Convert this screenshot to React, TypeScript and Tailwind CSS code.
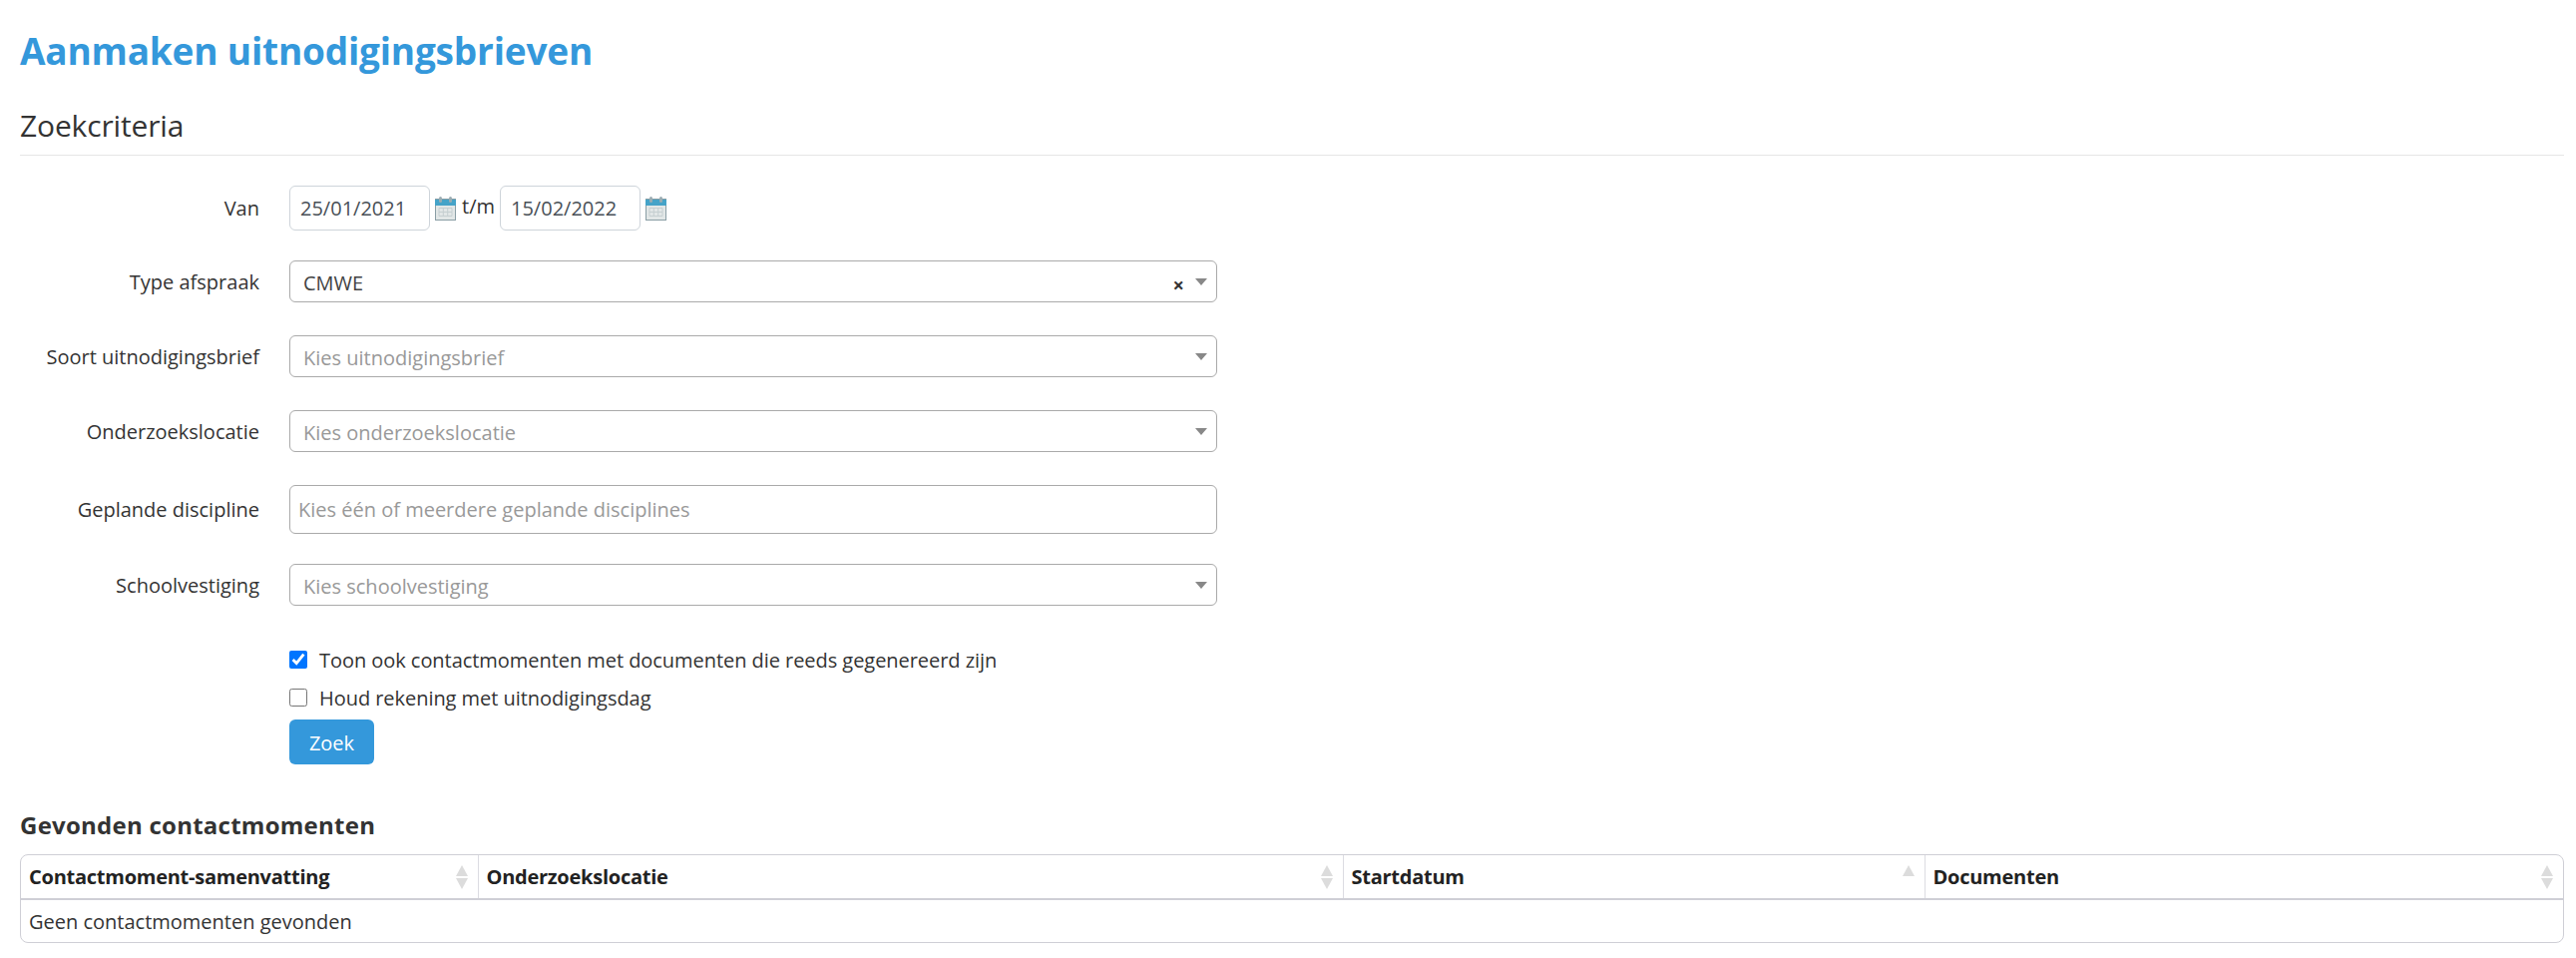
const font = { fontFamily: '"Open Sans", sans-serif' };

function Calendar() {
  return (
    <svg width="21" height="24" viewBox="0 0 21 24" className="shrink-0" aria-hidden="true">
      <rect x="0" y="2" width="21" height="22" fill="#8a9ea5" />
      <rect x="1" y="9" width="19" height="14" fill="#e2e7e7" />
      <rect x="0" y="3" width="21" height="6" fill="#45a3c8" />
      <rect x="4" y="0" width="3" height="6" rx="1.5" fill="#9aacb2" />
      <rect x="14" y="0" width="3" height="6" rx="1.5" fill="#9aacb2" />
      <path d="M4 11.5h13v8H4zM4 15.5h13M8.3 11.5v8M12.7 11.5v8" stroke="#c6cfd1" strokeWidth="1" fill="none" />
    </svg>
  );
}

function Arrow() {
  return (
    <svg width="12" height="7" viewBox="0 0 12 7" aria-hidden="true">
      <path d="M0 0h12L6 7z" fill="#888888" />
    </svg>
  );
}

function SortIcon({ upOnly }: { upOnly?: boolean }) {
  return (
    <svg width="14" height="24" viewBox="0 0 14 24" className="absolute right-[9px] top-[10px]" aria-hidden="true">
      <path d="M7 0l6 11H1z" fill="#dcdcdc" />
      {!upOnly && <path d="M7 24l6-11H1z" fill="#dcdcdc" />}
    </svg>
  );
}

function Row({ label, className, children }: { label: string; className: string; children: React.ReactNode }) {
  return (
    <div className={`flex items-center ${className}`}>
      <label className="w-[240px] pt-[1px] text-right text-[20px] text-[#333]">{label}</label>
      <div className="ml-[30px] flex items-center">{children}</div>
    </div>
  );
}

function Select({ value, placeholder }: { value?: string; placeholder?: string }) {
  return (
    <div className="relative flex h-[42px] w-[930px] items-center rounded-[6px] border border-[#aaaaaa] pl-[13px] pt-[3px] text-[20px]">
      <span className={value ? "text-[#444]" : "text-[#999]"}>{value ?? placeholder}</span>
      {value && <span className="absolute right-[32px] top-[10px] text-[20px] font-bold leading-[28px] text-[#333]">×</span>}
      <span className="absolute right-[9px] top-[17px] flex"><Arrow /></span>
    </div>
  );
}

function DateInput({ value }: { value: string }) {
  return (
    <div className="flex h-[45px] w-[141px] items-center rounded-[6px] border border-[#ced4da] pl-[10px] pt-[1px] text-[20px] text-[#495057]">
      {value}
    </div>
  );
}

const headers = [
  { title: "Contactmoment-samenvatting", width: "w-[458px]" },
  { title: "Onderzoekslocatie", width: "w-[867px]" },
  { title: "Startdatum", width: "w-[583px]", upOnly: true },
  { title: "Documenten", width: "" },
];

export default function App() {
  return (
    <div className="min-h-[960px] bg-white pl-5 pr-3 text-[#333]" style={font}>
      <h1 className="pt-[25px] text-[37px] font-bold leading-[52px] tracking-[-0.2px] text-[#3498db]">
        Aanmaken uitnodigingsbrieven
      </h1>
      <h2 className="mt-[29px] border-b border-[#e5e5e5] pb-[9px] text-[30px] leading-[40px] tracking-[-0.15px] text-[#333]">
        Zoekcriteria
      </h2>

      <form className="mt-[30px]">
        <Row label="Van" className="mb-[30px]">
          <DateInput value="25/01/2021" />
          <span className="ml-[5px]"><Calendar /></span>
          <span className="ml-[6px] mr-[5px] -translate-y-[2px] text-[20px] leading-[24px] text-[#333]">t/m</span>
          <DateInput value="15/02/2022" />
          <span className="ml-[5px]"><Calendar /></span>
        </Row>
        <Row label="Type afspraak" className="mb-[33px]"><Select value="CMWE" /></Row>
        <Row label="Soort uitnodigingsbrief" className="mb-[33px]"><Select placeholder="Kies uitnodigingsbrief" /></Row>
        <Row label="Onderzoekslocatie" className="mb-[33px]"><Select placeholder="Kies onderzoekslocatie" /></Row>
        <Row label="Geplande discipline" className="mb-[30px]">
          <div className="flex h-[49px] w-[930px] items-center rounded-[6px] border border-[#aaaaaa] pl-[8px] text-[20px] text-[#999]">
            Kies één of meerdere geplande disciplines
          </div>
        </Row>
        <Row label="Schoolvestiging" className="mb-[45px]"><Select placeholder="Kies schoolvestiging" /></Row>

        <div className="ml-[270px]">
          <label className="flex h-[18px] items-center gap-[12px] text-[20px] tracking-[-0.05px]">
            <input type="checkbox" defaultChecked className="h-[18px] w-[18px]" />
            <span className="pt-[2px]">Toon ook contactmomenten met documenten die reeds gegenereerd zijn</span>
          </label>
          <label className="mt-[20px] flex h-[18px] items-center gap-[12px] text-[20px] tracking-[-0.05px]">
            <input type="checkbox" className="h-[18px] w-[18px]" />
            <span className="pt-[2px]">Houd rekening met uitnodigingsdag</span>
          </label>
          <button type="button" className="mt-[13px] h-[45px] w-[85px] rounded-[6px] bg-[#3498db] pt-[2px] text-[20px] text-white">
            Zoek
          </button>
        </div>
      </form>

      <h3 className="mt-[43px] text-[24px] font-bold leading-[36px] tracking-[0.25px] text-[#333]">
        Gevonden contactmomenten
      </h3>

      <div className="mt-[11px] overflow-hidden rounded-[8px] border border-[#cfcfd6]">
        <table className="w-full table-fixed border-collapse text-[20px]">
          <thead>
            <tr className="h-[44px] border-b-2 border-[#cfcfd6]">
              {headers.map((h) => (
                <th key={h.title} className={`relative border-l border-[#dcdce2] pl-[8px] pt-[1px] text-left font-bold tracking-[-0.25px] text-[#222] first:border-l-0 ${h.width}`}>
                  {h.title}
                  <SortIcon upOnly={h.upOnly} />
                </th>
              ))}
            </tr>
          </thead>
          <tbody>
            <tr className="h-[43px]">
              <td colSpan={4} className="pl-[8px] pt-[1px] text-[#333]">Geen contactmomenten gevonden</td>
            </tr>
          </tbody>
        </table>
      </div>
    </div>
  );
}
